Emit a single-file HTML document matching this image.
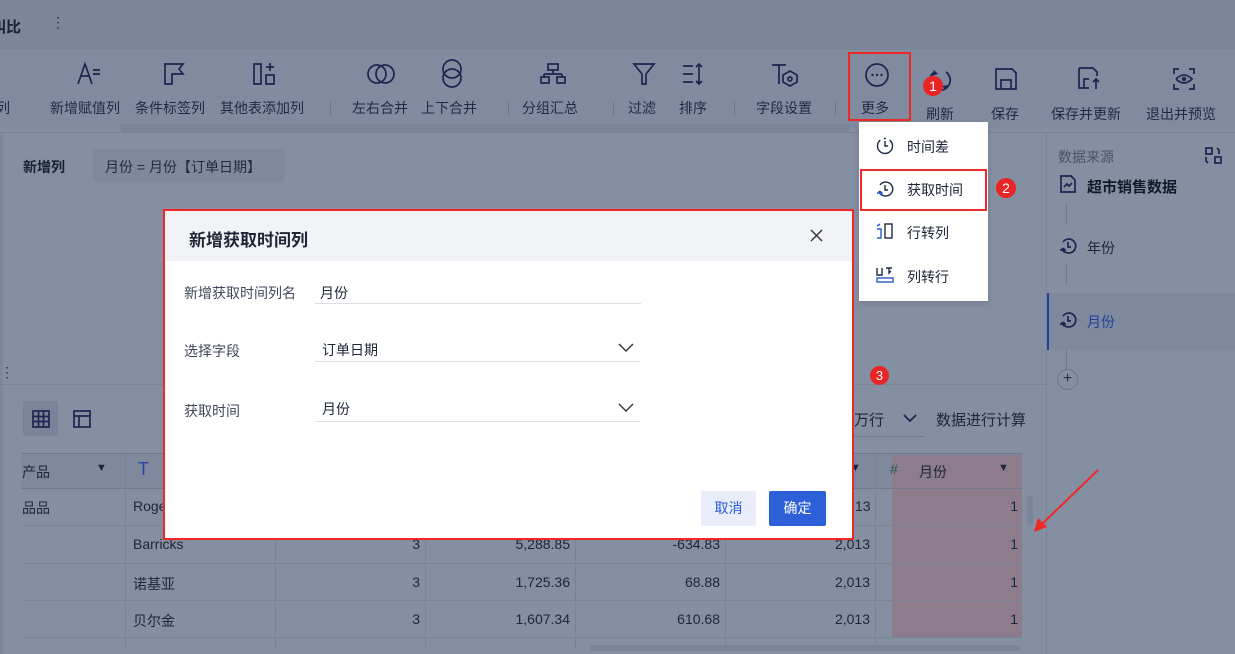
<!DOCTYPE html>
<html><head><meta charset="utf-8"><style>
*{margin:0;padding:0;box-sizing:border-box}
body{width:1235px;height:654px;overflow:hidden;background:#858fa2;font-family:"Liberation Sans","Noto Sans CJK SC",sans-serif;position:relative;color:#1e2536}
.a{position:absolute}
.t{font-size:14px;white-space:nowrap}
.tb{font-size:14px;color:#1e2a44;white-space:nowrap;text-align:center}
svg{position:absolute;overflow:visible}
.ic{stroke:#1a2650;fill:none;stroke-width:1.7}
.cell{position:absolute;font-size:14px;color:#1e2536;text-align:right}
</style></head><body>
<!-- top bar -->
<div class="a" style="left:0;top:0;width:1235px;height:50px;background:#7c869a"></div>
<div class="a t" style="left:-9px;top:16px;font-weight:bold;font-size:15px;color:#1a2030">叫比</div>
<div class="a t" style="left:51px;top:14px;color:#2a3042">⋮</div>
<!-- toolbar -->
<div class="a" style="left:0;top:51px;width:1235px;height:77px;background:#818b9f"></div>
<div class="a" style="left:120px;top:124px;width:730px;height:8px;border-radius:4px;background:#7a8498"></div>
<div class="a" style="left:0;top:132px;width:1235px;height:1px;background:#7a8496"></div>
<!-- toolbar labels -->
<div class="a tb" style="left:-4px;top:98px">列</div>
<div class="a tb" style="left:50px;top:98px">新增赋值列</div>
<div class="a tb" style="left:135px;top:98px">条件标签列</div>
<div class="a tb" style="left:220px;top:98px">其他表添加列</div>
<div class="a tb" style="left:352px;top:98px">左右合并</div>
<div class="a tb" style="left:421px;top:98px">上下合并</div>
<div class="a tb" style="left:522px;top:98px">分组汇总</div>
<div class="a tb" style="left:628px;top:98px">过滤</div>
<div class="a tb" style="left:679px;top:98px">排序</div>
<div class="a tb" style="left:756px;top:98px">字段设置</div>
<div class="a tb" style="left:861px;top:98px">更多</div>
<div class="a tb" style="left:926px;top:104px">刷新</div>
<div class="a tb" style="left:991px;top:104px">保存</div>
<div class="a tb" style="left:1051px;top:104px">保存并更新</div>
<div class="a tb" style="left:1146px;top:104px">退出并预览</div>
<div class="a" style="left:508px;top:102px;width:1px;height:14px;background:#6d778b"></div>
<div class="a" style="left:330px;top:102px;width:1px;height:14px;background:#6d778b"></div>
<div class="a" style="left:613px;top:102px;width:1px;height:14px;background:#6d778b"></div>
<div class="a" style="left:734px;top:102px;width:1px;height:14px;background:#6d778b"></div>
<div class="a" style="left:835px;top:102px;width:1px;height:14px;background:#6d778b"></div>
<!-- toolbar icons -->
<svg style="left:76px;top:62px" width="26" height="24"><path class="ic" d="M2 22 L9 2 L16 22 M5 14 H13 M17 8 H24 M17 12 H24"/></svg>
<svg style="left:163px;top:62px" width="22" height="24"><path class="ic" d="M2 2 V22 H9 V12 H20 L16 7 L20 2 Z" fill="#5a6a9a"/></svg>
<svg style="left:252px;top:62px" width="26" height="24"><rect class="ic" x="2" y="2" width="7" height="20"/><rect class="ic" x="14" y="13" width="8" height="9"/><path class="ic" d="M18 1 V9 M14 5 H22"/></svg>
<svg style="left:367px;top:62px" width="30" height="24"><circle class="ic" cx="10" cy="12" r="9"/><circle class="ic" cx="18" cy="12" r="9"/></svg>
<svg style="left:440px;top:60px" width="26" height="28"><circle class="ic" cx="12" cy="9" r="9"/><circle class="ic" cx="12" cy="18" r="9"/></svg>
<svg style="left:540px;top:62px" width="26" height="24"><rect class="ic" x="8" y="2" width="10" height="6"/><path class="ic" d="M13 8 V12 M4 12 H22 M4 12 V15 M22 12 V15"/><rect class="ic" x="1" y="15" width="8" height="6"/><rect class="ic" x="17" y="15" width="8" height="6"/></svg>
<svg style="left:632px;top:62px" width="24" height="24"><path class="ic" d="M2 2 H22 L14 12 V22 H10 V12 Z"/></svg>
<svg style="left:681px;top:62px" width="28" height="24"><path class="ic" d="M2 4 H12 M2 12 H12 M2 20 H12 M18 2 V22 M15 5 L18 2 L21 5 M15 19 L18 22 L21 19"/></svg>
<svg style="left:770px;top:62px" width="30" height="26"><path class="ic" d="M2 3 H16 M9 3 V22"/><path class="ic" d="M20 9 L27 13 V20 L20 24 L13 20 V13 Z"/><circle class="ic" cx="20" cy="17" r="2"/></svg>
<svg style="left:864px;top:62px" width="26" height="26"><circle class="ic" cx="13" cy="13" r="11"/><circle cx="8.5" cy="13" r="1.2" fill="#1e2a55"/><circle cx="13" cy="13" r="1.2" fill="#1e2a55"/><circle cx="17.5" cy="13" r="1.2" fill="#1e2a55"/></svg>
<svg style="left:928px;top:68px" width="26" height="26"><path class="ic" d="M6 4 A10 10 0 0 0 6 20 M18 4 A10 10 0 0 1 14 22"/><path d="M6 2 L10 6 L4 8 Z M18 22 L14 18 L20 17 Z" fill="#1e2a55"/></svg>
<svg style="left:994px;top:67px" width="24" height="24"><path class="ic" d="M2 2 H18 L22 6 V22 H2 Z M7 22 V13 H17 V22"/></svg>
<svg style="left:1077px;top:66px" width="26" height="26"><path class="ic" d="M2 2 H16 L20 6 V10 M2 2 V22 H12 M7 22 V13 H12"/><path class="ic" d="M19 23 V13 M16 16 L19 13 L22 16"/></svg>
<svg style="left:1172px;top:67px" width="24" height="24"><path class="ic" d="M2 7 V2 H7 M17 2 H22 V7 M22 17 V22 H17 M7 22 H2 V17 M4 12 Q12 4 20 12 Q12 20 4 12"/><circle cx="12" cy="12" r="2.3" fill="#1e2a55"/></svg>
<!-- red box more -->
<div class="a" style="left:848px;top:52px;width:63px;height:69px;border:2px solid #f02828"></div>
<!-- left content -->
<div class="a" style="left:0;top:133px;width:3px;height:521px;background:#7d879a"></div>
<div class="a t" style="left:23px;top:157px;font-weight:bold;color:#1a2030">新增列</div>
<div class="a" style="left:93px;top:149px;width:192px;height:33px;background:#7f899d;border-radius:3px"></div>
<div class="a t" style="left:105px;top:157px;color:#242b3e">月份 = 月份【订单日期】</div>
<div class="a t" style="left:0px;top:364px;color:#333">⋮</div>
<div class="a" style="left:0;top:384px;width:1046px;height:1px;background:#7a8496"></div>
<!-- table tools -->
<div class="a" style="left:23px;top:401px;width:35px;height:35px;border-radius:3px;background:#7a8498"></div>
<svg style="left:32px;top:410px" width="18" height="18"><rect class="ic" x="1" y="1" width="16" height="16"/><path class="ic" d="M1 6.5H17M1 11.5H17M6.5 1V17M11.5 1V17"/></svg>
<svg style="left:73px;top:410px" width="18" height="18"><rect class="ic" x="1" y="1" width="16" height="16"/><path class="ic" d="M1 6H17M6 6V17"/></svg>
<div class="a t" style="left:854px;top:409px;color:#1e2536;font-size:15px">万行</div>
<svg style="left:903px;top:413px" width="14" height="10"><path class="ic" d="M1 2 L7 8 L13 2"/></svg>
<div class="a" style="left:852px;top:436px;width:72px;height:1px;background:#6f798d"></div>
<div class="a t" style="left:936px;top:409px;font-size:15px">数据进行计算</div>
<!-- table -->
<div class="a" style="left:22px;top:453px;width:1000px;height:1px;background:#6f798d"></div>
<div class="a" style="left:22px;top:454px;width:1000px;height:34px;background:#7f899d"></div>
<div class="a" style="left:892px;top:455px;width:130px;height:182px;background:#8d7d8c"></div>
<div class="a" style="left:22px;top:488px;width:1000px;height:1px;background:#6f798d"></div>
<div class="a" style="left:22px;top:525px;width:1000px;height:1px;background:#7a8497"></div>
<div class="a" style="left:22px;top:563px;width:1000px;height:1px;background:#7a8497"></div>
<div class="a" style="left:22px;top:600px;width:1000px;height:1px;background:#7a8497"></div>
<div class="a" style="left:22px;top:637px;width:1000px;height:1px;background:#7a8497"></div>
<div class="a" style="left:125px;top:454px;width:1px;height:196px;background:#7a8497"></div>
<div class="a" style="left:275px;top:454px;width:1px;height:196px;background:#7a8497"></div>
<div class="a" style="left:425px;top:454px;width:1px;height:196px;background:#7a8497"></div>
<div class="a" style="left:575px;top:454px;width:1px;height:196px;background:#7a8497"></div>
<div class="a" style="left:725px;top:454px;width:1px;height:196px;background:#7a8497"></div>
<div class="a" style="left:875px;top:454px;width:1px;height:196px;background:#7a8497"></div>
<div class="a" style="left:590px;top:645px;width:430px;height:6px;border-radius:3px;background:#7b8599"></div>
<div class="a t" style="left:22px;top:462px">产品</div>
<div class="a t" style="left:96px;top:462px;font-size:11px">▼</div>
<div class="a t" style="left:138px;top:459px;color:#2a45a0;font-size:18px">T</div>
<div class="a t" style="left:850px;top:462px;font-size:11px">▼</div>
<div class="a t" style="left:890px;top:461px;color:#2a5a55">#</div>
<div class="a t" style="left:919px;top:462px">月份</div>
<div class="a t" style="left:998px;top:462px;font-size:11px">▼</div>
<div class="a t" style="left:22px;top:498px">品品</div>
<div class="a t" style="left:133px;top:498px">Roge</div>
<div class="a t" style="left:133px;top:536px">Barricks</div>
<div class="a t" style="left:133px;top:574px">诺基亚</div>
<div class="a t" style="left:133px;top:611px">贝尔金</div>
<div class="cell" style="left:855px;top:498px;width:14px">13</div>
<div class="cell" style="left:380px;top:536px;width:40px">3</div>
<div class="cell" style="left:470px;top:536px;width:100px">5,288.85</div>
<div class="cell" style="left:620px;top:536px;width:100px">-634.83</div>
<div class="cell" style="left:770px;top:536px;width:100px">2,013</div>
<div class="cell" style="left:380px;top:574px;width:40px">3</div>
<div class="cell" style="left:470px;top:574px;width:100px">1,725.36</div>
<div class="cell" style="left:620px;top:574px;width:100px">68.88</div>
<div class="cell" style="left:770px;top:574px;width:100px">2,013</div>
<div class="cell" style="left:380px;top:611px;width:40px">3</div>
<div class="cell" style="left:470px;top:611px;width:100px">1,607.34</div>
<div class="cell" style="left:620px;top:611px;width:100px">610.68</div>
<div class="cell" style="left:770px;top:611px;width:100px">2,013</div>
<div class="cell" style="left:960px;top:498px;width:58px">1</div>
<div class="cell" style="left:960px;top:536px;width:58px">1</div>
<div class="cell" style="left:960px;top:574px;width:58px">1</div>
<div class="cell" style="left:960px;top:611px;width:58px">1</div>
<div class="a" style="left:1027px;top:495px;width:6px;height:30px;border-radius:3px;background:#7b8599"></div>
<!-- right panel -->
<div class="a" style="left:1046px;top:133px;width:1px;height:521px;background:#7a8496"></div>
<div class="a t" style="left:1058px;top:147px;color:#4a5266">数据来源</div>
<svg style="left:1205px;top:147px" width="18" height="18"><rect class="ic" x="1" y="1" width="6" height="6" stroke-width="1.2"/><rect class="ic" x="10" y="10" width="6" height="6" stroke-width="1.2"/><path class="ic" stroke-width="1.2" d="M12 1 L14 3 V7 M1 10 V14 L3 16"/></svg>
<svg style="left:1060px;top:175px" width="16" height="18"><path class="ic" stroke="#2a45a0" stroke-width="1.3" d="M1 1 H11 L15 5 V17 H1 Z M4 12 L7 9 L9 11 L12 8"/></svg>
<div class="a t" style="left:1087px;top:176px;font-weight:bold;font-size:15px;color:#141a28">超市销售数据</div>
<div class="a" style="left:1066px;top:204px;width:1px;height:20px;background:#6f798d"></div>
<div class="a" style="left:1066px;top:264px;width:1px;height:20px;background:#6f798d"></div>
<div class="a" style="left:1066px;top:350px;width:1px;height:20px;background:#6f798d"></div>
<svg style="left:1059px;top:237px" width="18" height="18"><path class="ic" stroke-width="1.4" d="M3 11 A7 7 0 1 0 4 5 M9 5 V10 H12 M1 13 H6 M4 11 L6 13 L4 15"/></svg>
<div class="a t" style="left:1087px;top:238px">年份</div>
<div class="a" style="left:1047px;top:293px;width:188px;height:57px;background:#7f899d"></div>
<div class="a" style="left:1047px;top:293px;width:2px;height:57px;background:#22409a"></div>
<svg style="left:1059px;top:311px" width="18" height="18"><path class="ic" stroke="#2a45a0" stroke-width="1.4" d="M3 11 A7 7 0 1 0 4 5 M9 5 V10 H12 M1 13 H6 M4 11 L6 13 L4 15"/></svg>
<div class="a t" style="left:1087px;top:312px;color:#22409a">月份</div>
<div class="a" style="left:1057px;top:369px;width:21px;height:21px;border:1px solid #6a7489;border-radius:50%;text-align:center;font-size:16px;line-height:18px;color:#2a3042">+</div>
<!-- dropdown menu -->
<div class="a" style="left:859px;top:122px;width:129px;height:179px;background:#fff;box-shadow:0 2px 6px rgba(0,0,0,.15)"></div>
<svg style="left:876px;top:137px" width="18" height="18"><circle cx="9" cy="9" r="7.5" fill="none" stroke="#1e2a44" stroke-width="1.4" stroke-dasharray="30 4 2 4"/><path d="M9 4 V9 H12" stroke="#1e2a44" stroke-width="1.4" fill="none"/></svg>
<div class="a t" style="left:907px;top:137px;color:#1e2536">时间差</div>
<svg style="left:876px;top:180px" width="18" height="18"><path fill="none" stroke="#1e2a44" stroke-width="1.4" d="M3 11 A7 7 0 1 0 4 5 M9 5 V10 H12"/><path fill="none" stroke="#2a5ad0" stroke-width="1.4" d="M1 13 H6 M4 11 L6 13 L4 15"/></svg>
<div class="a t" style="left:907px;top:180px;color:#1e2536">获取时间</div>
<div class="a" style="left:860px;top:169px;width:127px;height:42px;border:2px solid #f02828"></div>
<svg style="left:876px;top:223px" width="18" height="16"><path fill="none" stroke="#2a5ad0" stroke-width="1.4" d="M1 6 H5 V15 H1 M1 3 L4 1"/><rect x="9" y="1" width="7" height="14" fill="none" stroke="#1e2a44" stroke-width="1.4"/></svg>
<div class="a t" style="left:907px;top:223px;color:#1e2536">行转列</div>
<svg style="left:876px;top:267px" width="18" height="16"><path fill="none" stroke="#1e2a44" stroke-width="1.4" d="M1 1 V8 H6 V1 M10 1 H16 M13 1 V6 L15 4"/><rect x="1" y="11" width="16" height="4" fill="none" stroke="#2a5ad0" stroke-width="1.4"/></svg>
<div class="a t" style="left:907px;top:267px;color:#1e2536">列转行</div>
<!-- badges -->
<div class="a" style="left:923px;top:76px;width:20px;height:20px;border-radius:50%;background:#e82424;color:#fff;font-size:14px;text-align:center;line-height:20px">1</div>
<div class="a" style="left:996px;top:178px;width:20px;height:20px;border-radius:50%;background:#e82424;color:#fff;font-size:14px;text-align:center;line-height:20px">2</div>
<div class="a" style="left:870px;top:366px;width:19px;height:19px;border-radius:50%;background:#e82424;color:#fff;font-size:13px;text-align:center;line-height:19px">3</div>
<!-- dialog -->
<div class="a" style="left:163px;top:209px;width:691px;height:331px;border:2px solid #f02828;background:#fff"></div>
<div class="a" style="left:165px;top:211px;width:687px;height:50px;background:#f2f3f6"></div>
<div class="a t" style="left:189px;top:226px;font-size:17px;font-weight:bold;color:#1e2536">新增获取时间列</div>
<svg style="left:810px;top:229px" width="13" height="13"><path d="M1 1 L12 12 M12 1 L1 12" stroke="#333" stroke-width="1.4"/></svg>
<div class="a t" style="left:184px;top:283px;color:#40485a">新增获取时间列名</div>
<div class="a t" style="left:320px;top:283px;color:#1e2536">月份</div>
<div class="a" style="left:315px;top:303px;width:326px;height:1px;background:#dcdee4"></div>
<div class="a t" style="left:184px;top:341px;color:#40485a">选择字段</div>
<div class="a t" style="left:322px;top:340px;color:#1e2536">订单日期</div>
<svg style="left:618px;top:343px" width="16" height="9"><path d="M1 1 L8 8 L15 1" fill="none" stroke="#333" stroke-width="1.4"/></svg>
<div class="a" style="left:315px;top:361px;width:325px;height:1px;background:#dcdee4"></div>
<div class="a t" style="left:184px;top:401px;color:#40485a">获取时间</div>
<div class="a t" style="left:322px;top:399px;color:#1e2536">月份</div>
<svg style="left:618px;top:403px" width="16" height="9"><path d="M1 1 L8 8 L15 1" fill="none" stroke="#333" stroke-width="1.4"/></svg>
<div class="a" style="left:315px;top:421px;width:325px;height:1px;background:#dcdee4"></div>
<div class="a" style="left:701px;top:491px;width:55px;height:35px;border-radius:2px;background:#e8edf9;color:#2a5ad0;font-size:14px;text-align:center;line-height:35px">取消</div>
<div class="a" style="left:769px;top:491px;width:57px;height:35px;border-radius:2px;background:#2c5fd8;color:#fff;font-size:14px;text-align:center;line-height:35px">确定</div>
<!-- arrow -->
<svg style="left:0;top:0" width="1235" height="654"><path d="M1098 470 L1040 526" stroke="#f02828" stroke-width="2"/><path d="M1034 532 L1038 518 L1047 527 Z" fill="#f02828"/></svg>
</body></html>
